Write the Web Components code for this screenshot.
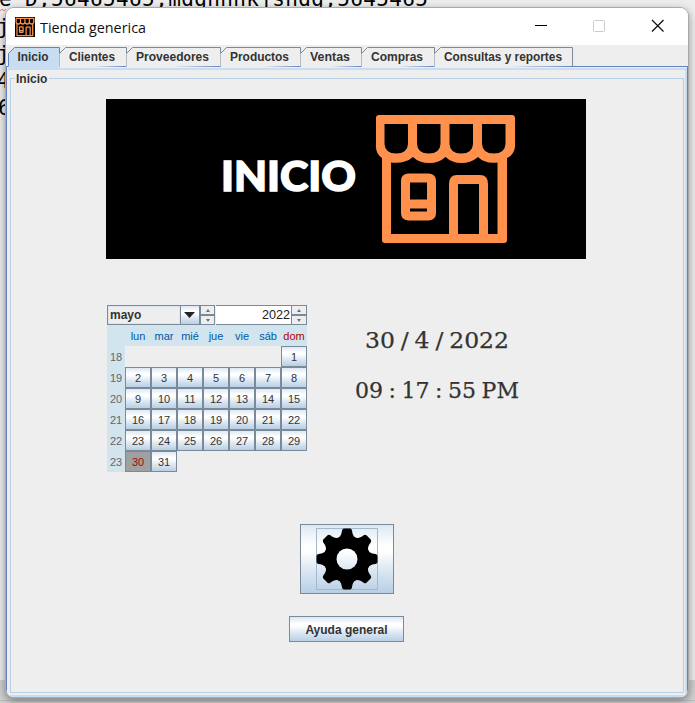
<!DOCTYPE html>
<html lang="es"><head><meta charset="utf-8"><title>Tienda generica</title>
<style>
html,body{margin:0;width:695px;height:703px;overflow:hidden}
body{font-family:"Liberation Sans",Arial,sans-serif}
</style></head><body>
<desktop-area><app-window>
<title-bar slot="title">Tienda generica</title-bar>
<tab-strip slot="tabs"></tab-strip>
<banner-image></banner-image>
<info-row></info-row>
<gear-button></gear-button>
<metal-button>Ayuda general</metal-button>
</app-window></desktop-area>
<script>
const GRAD='linear-gradient(#dde8f3 0,#fff 30%,#fff 38%,#dde8f3 65%,#b8cfe5 100%)';
const make=(name,html,after)=>customElements.define(name,class extends HTMLElement{
  constructor(){super();this.attachShadow({mode:'open'});}
  connectedCallback(){this.shadowRoot.innerHTML=typeof html==='function'?html(this):html;if(after)after(this);}
});
const fit=(x,y,w,t,style)=>`<text x="${x}" y="${y}" textLength="${w}" lengthAdjust="spacingAndGlyphs" style="${style}">${t}</text>`;
const hole=x=>`M${x} 9H${x+23.5}V29Q${x+23} 38.500 ${x+11.75} 38.500Q${x+.5} 38.500 ${x} 29Z`;
const STORE=`<g fill="currentColor" fill-rule="evenodd">
<path d="M3 0H136Q139 0 139 3V32Q138 40 131 43V125Q131 128 128 128H9Q6 128 6 125V43Q0 39 0 32V3Q0 0 3 0ZM${8.5} 9${hole(8.5)}${hole(41)}${hole(73.5)}${hole(106)}
M15 47.500V119H73V69Q73 60 81 60H104Q112 60 112 69V119H121.500V47.500Q109 49 102 42Q95 48 85.500 48Q76 48 69.500 42Q63 48 53.500 48Q43 48 37 42Q29 49 15 47.500ZM82 69V119H103V69Z"/>
<path d="M32 58.500H53Q60 59 60 66V98Q60 105 53 105.500H32Q25 105 25 98V66Q25 59 32 58.500ZM34 67.500V84.500H51V67.500ZM34 93.500V96.500H51V93.500Z"/></g>`;

make('desktop-area',`<style>:host{display:block;position:relative;width:695px;height:703px;overflow:hidden;background:linear-gradient(#ededed 0 680px,#d0d0d0 680px 700px,#bdbdbd 700px 701px,#d0d0d0 701px)}
svg{position:absolute;left:0;top:0}::slotted(*){position:absolute;left:6px;top:8px}</style>
<svg width="695" height="703" font-family="'DejaVu Sans Mono',monospace" font-size="21">
<text y="6" x="-1" textLength="429">e D,56465465,mdghhhkjshdg,5645465</text><text x="-3" y="34">j</text><text x="-3" y="61">j</text><text x="-3" y="88">4</text><text x="-2" y="115">6</text>
<path d="M0 11l2-2 2 2 2-2" fill="none" stroke="#e08070"/></svg><slot></slot>`);

make('app-window',`<style>:host{box-sizing:border-box;width:682px;height:689px;display:flex;flex-direction:column;background:#eee;border-radius:8px;overflow:hidden;box-shadow:0 0 0 1px #aaa,0 3px 9px 1px #0006}
.pane{flex:1;box-sizing:border-box;border:1px solid #6382bf;border-bottom:0;padding:1px 0 0 1px;display:flex;background:#eee}
.inner{flex:1;border:2px solid #c8ddf2;border-left:0;padding:8px 1px 2px 2px;display:flex}
fieldset{flex:1;min-width:0;margin:0;padding:0;border:1px solid #b8cfe5;position:relative;display:flex;flex-direction:column;box-sizing:border-box}
.cap{position:absolute;left:4px;top:-7px;background:#eee;padding:0 2px 0 1px;font:bold 12px/15px "Liberation Sans",sans-serif;color:#333}
</style><slot name="title"></slot><slot name="tabs"></slot><div class="pane"><div class="inner"><fieldset><span class="cap">Inicio</span><slot></slot></fieldset></div></div>`);

make('title-bar',`<style>:host{display:flex;height:37px;background:#fff;align-items:center;padding-left:9px;color:#ff914d;flex:none}
.logo{background:#000}.t{margin-left:5px}.c{margin-left:auto}</style>
<svg class="logo" width="20" height="20" viewBox="-4 -5 147 138" preserveAspectRatio="none">${STORE}</svg>
<svg class="t" width="112" height="28">${fit(0,19.5,106,'','')}</svg>
<svg class="c" width="166" height="37" fill="none"><path d="M13 17.500H25" stroke="#000"/><rect x="71.500" y="12.500" width="11" height="11" rx="1" stroke="#ccc"/><path d="M130 12L141.500 23.500M141.500 12L130 23.500" stroke="#111" stroke-width="1.300"/></svg>`,
e=>{const t=e.shadowRoot.querySelector('text');t.textContent=e.textContent;t.setAttribute('style','font:14.800px "Open Sans","Noto Sans",sans-serif;fill:#111');});

make('tab-strip',`<style>:host{display:flex;height:21px;flex:none;padding:2px 0 0 2px;box-sizing:border-box}</style>
<metal-tab w="51" t="31" on>Inicio</metal-tab><metal-tab w="67" t="46">Clientes</metal-tab><metal-tab w="94" t="73">Proveedores</metal-tab><metal-tab w="80" t="59">Productos</metal-tab><metal-tab w="61" t="40">Ventas</metal-tab><metal-tab w="73" t="52">Compras</metal-tab><metal-tab w="138" t="118">Consultas y reportes</metal-tab>`);
make('metal-tab',e=>{const w=+e.getAttribute('w'),on=e.hasAttribute('on');return `<style>:host{display:block;width:${w}px;height:20px;position:relative}svg{display:block;overflow:visible}</style>
<svg width="${w}" height="20"><path d="M.5 21V6.500L6.500 .5H${w+.5}V${on?21:19}" fill="${on?'#c8ddf2':'#eee'}" stroke="none"/><path d="M${on?'.5 19V6.500':'.5 6.500'}L6.500 .5H${w+.5}V19" fill="none" stroke="${on?'#6382bf':'#7a8a99'}"/>${fit(on?9.5:10,14,e.getAttribute('t'),e.textContent,'font:bold 12px Liberation Sans,sans-serif;fill:#333')}</svg>`});

make('banner-image',`<style>:host{display:block;width:480px;height:160px;margin:20px 0 0 95px;background:#000;color:#ff914d;flex:none}svg{display:block}</style>
<svg width="480" height="160"><text x="115" y="92" textLength="135" lengthAdjust="spacingAndGlyphs" style="font:900 41px Lato,sans-serif;fill:#fff;stroke:#fff;stroke-width:1.400px">INICIO</text><g transform="translate(270 16)">${STORE}</g></svg>`);

make('info-row',`<style>:host{display:flex;margin:46px 0 0 96px;height:167px;flex:none}svg{margin-left:41px;margin-top:12px}text{font-family:"DejaVu Serif",serif;fill:#333;stroke:#333;stroke-width:.25px;word-spacing:-1.500px}</style>
<month-calendar></month-calendar><svg width="180" height="90" font-size="22"><text x="17" y="31" textLength="144" lengthAdjust="spacingAndGlyphs">30 / 4 / 2022</text><text x="7" y="81" textLength="164" lengthAdjust="spacingAndGlyphs">09 : 17 : 55 PM</text></svg>`);

make('spin-buttons',`<style>:host{display:flex;flex-direction:column;width:16px;height:20px}i{flex:1;box-sizing:border-box;border:1px solid #7a8a99;display:flex;align-items:center;justify-content:center}</style><i><svg width="4" height="3"><path d="M0 3L2 0 4 3Z" fill="#66727f"/></svg></i><i><svg width="4" height="3"><path d="M0 0L2 3 4 0Z" fill="#66727f"/></svg></i>`);

make('month-calendar',`<style>:host{display:block;width:200px;font-size:11px;color:#333}
.top{display:flex;height:20px}.m{width:74px;box-sizing:border-box;border:1px solid #7a8a99;font:bold 12px/18px "Liberation Sans";padding-left:2px;box-shadow:inset 0 0 0 1px #dbe6f2}
.a{width:20px;box-sizing:border-box;border:1px solid #7a8a99;margin-left:-1px;background:${GRAD};display:flex;align-items:center;justify-content:center}
.y{width:75px;box-sizing:border-box;background:#fff;border-top:1px solid #7a8a99;border-bottom:1px solid #7a8a99;font-size:12.600px;line-height:19px;text-align:right;color:#222;margin-left:1px;padding-right:1px}
.g{display:grid;grid-template-columns:18px repeat(7,26px);grid-auto-rows:21px;line-height:21px;text-align:center}
.h,.w{background:#d2e4ee;color:#666}.h{color:#0058a8;line-height:22px}.h.r{color:#b00000}.w{line-height:22px}.d{box-sizing:border-box;border:1px solid #7a8a99;background:${GRAD};line-height:20px}.x{background:#a0a0a0;color:#b00000}</style>
<div class="top"><div class="m">mayo</div><div class="a"><svg width="11" height="6"><path d="M0 0H11L5.500 6Z" fill="#222"/></svg></div><spin-buttons></spin-buttons><div class="y">2022</div><spin-buttons></spin-buttons></div><div class="g"></div>`,
e=>{let s='<div class="h"></div>'+['lun','mar','mié','jue','vie','sáb','dom'].map((d,i)=>`<div class="h ${i==6?'r':''}">${d}</div>`).join('');
for(let r=0;r<6;r++){s+=`<div class="w">${18+r}</div>`;for(let c=0;c<7;c++){const d=r*7+c-5;s+=d>0&&d<32?`<div class="d ${d==30?'x':''}">${d}</div>`:'<div></div>';}}
e.shadowRoot.querySelector('.g').innerHTML=s;});

make('gear-button',e=>{let d='';
for(let k=0;k<8;k++)d+=`<path transform="rotate(${k*45})" d="M-10.500-20.500C-7-21.500-5.500-24-5-28.500Q-4.500-30.500-3-30.500H3Q4.500-30.500 5-28.500C5.500-24 7-21.500 10.500-20.500L0 0Z"/>`;
return `<style>:host{display:block;flex:none;box-sizing:border-box;width:94px;height:70px;margin:52px 0 0 289px;border:1px solid #7a8a99;background:${GRAD}}svg{display:block}</style>
<svg width="92" height="68"><rect x="15.500" y="3.500" width="61" height="61" fill="none" stroke="#a3b8cc"/><mask id="m"><rect x="-40" y="-40" width="80" height="80" fill="#fff"/><circle r="10.500" fill="#000"/></mask><g transform="translate(46 34)"><g mask="url(#m)">${d}<circle r="22.800"/></g></g></svg>`});
make('metal-button',`<style>:host{display:block;flex:none;box-sizing:border-box;width:115px;height:26px;margin:22px 0 0 278px;border:1px solid #7a8a99;background:${GRAD};font:bold 12px/26px "Liberation Sans",sans-serif;text-align:center;color:#333}</style><slot></slot>`);
</script></body></html>
